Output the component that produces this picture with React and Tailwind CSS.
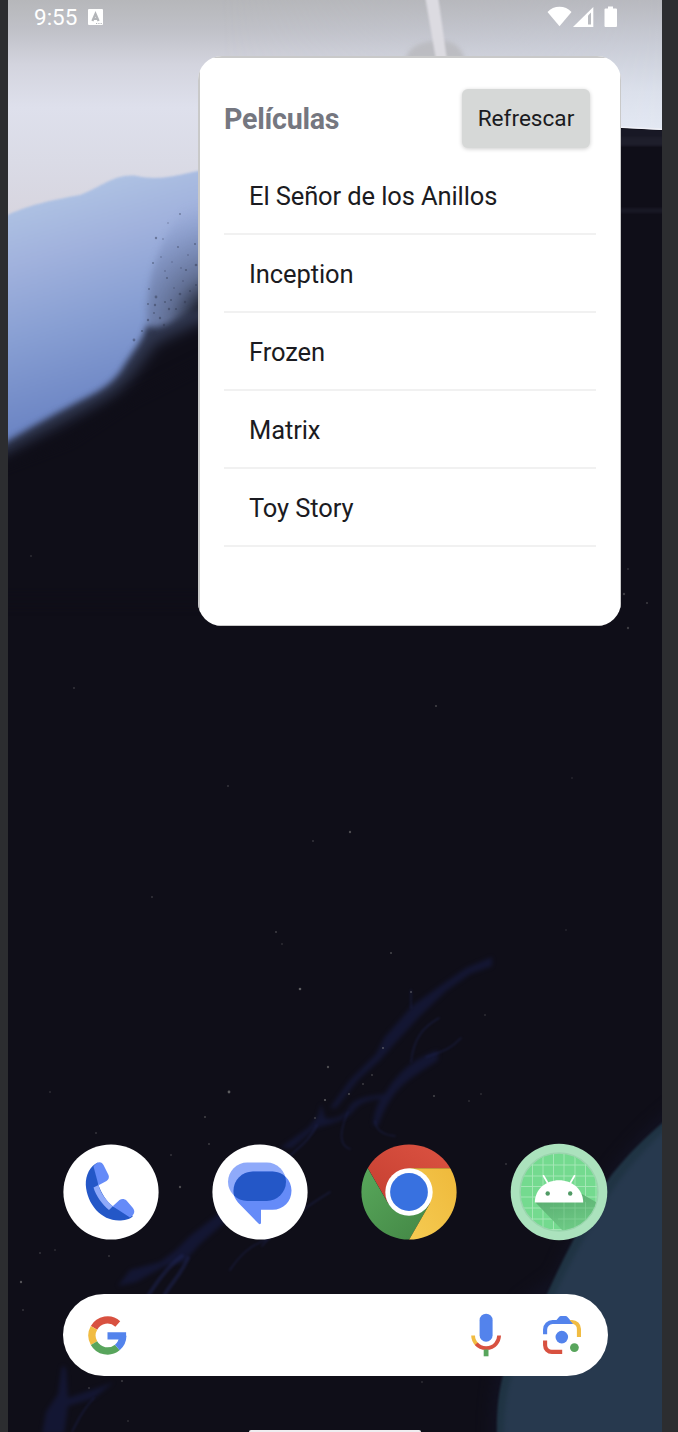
const movies = ['El Señor de los Anillos', 'Inception', 'Frozen', 'Matrix', 'Toy Story'];

const stars = [
  [300, 989, 1.3, 0.5], [391, 953, 1.1, 0.35], [411, 992, 1.1, 0.35], [229, 1092, 1.4, 0.5],
  [328, 1067, 1.2, 0.4], [383, 1048, 1.1, 0.4], [325, 1100, 1.1, 0.5], [315, 1118, 1, 0.3],
  [434, 1096, 1.1, 0.35], [276, 932, 1.1, 0.3], [282, 944, 1, 0.2], [349, 1094, 1, 0.4],
  [363, 1084, 1, 0.3], [372, 1075, 1, 0.3], [205, 1117, 1, 0.35], [21, 1282, 1.2, 0.45],
  [40, 1253, 1, 0.25], [23, 1310, 1, 0.25], [55, 1250, 1, 0.2], [109, 1256, 1, 0.25],
  [180, 1187, 1.2, 0.4], [171, 1155, 1, 0.25], [209, 1144, 1, 0.3], [96, 1133, 1, 0.25],
  [128, 1421, 1, 0.2], [350, 832, 1.2, 0.4], [313, 841, 1, 0.25], [228, 786, 1, 0.25],
  [436, 706, 1, 0.35], [624, 594, 1.2, 0.3], [647, 603, 1, 0.3], [628, 628, 1.2, 0.3],
  [628, 569, 1, 0.2], [74, 688, 1, 0.25], [31, 556, 1, 0.2], [122, 1381, 1, 0.3],
  [89, 1388, 1, 0.25], [506, 1164, 1, 0.25], [481, 1094, 1, 0.2], [469, 1101, 1, 0.2],
  [572, 778, 1, 0.15], [152, 897, 1, 0.25], [50, 1092, 1, 0.2], [422, 1382, 1, 0.2],
  [566, 930, 1, 0.15], [485, 1015, 1, 0.2],
];

const specks = [
  [156, 238, 1.2], [163, 239, 0.8], [153, 263, 1], [161, 257, 0.8], [178, 247, 0.9], [180, 214, 0.9],
  [167, 278, 1], [165, 271, 0.8], [156, 297, 1.4], [180, 294, 1.3], [149, 289, 0.9], [148, 304, 1],
  [155, 305, 1.2], [154, 313, 0.9], [186, 270, 1.1], [196, 265, 1.3], [196, 285, 1], [195, 244, 1],
  [171, 300, 1], [169, 309, 1.2], [160, 318, 1.2], [134, 340, 1.4], [155, 333, 1.8], [174, 288, 0.8],
  [183, 281, 0.8], [188, 255, 0.8], [168, 223, 0.7], [148, 320, 1.2], [164, 325, 1.2], [176, 309, 1.1],
  [185, 302, 1.2], [190, 291, 1.1], [142, 331, 1.1], [181, 268, 0.8], [172, 262, 0.7], [165, 302, 1],
];

function Wallpaper() {
  return (
    <svg className="absolute inset-0 h-full w-full" viewBox="8 0 654 1432" aria-hidden="true">
      <defs>
        <linearGradient id="sky" gradientUnits="userSpaceOnUse" x1="0" y1="0" x2="0" y2="215">
          <stop offset="0" stopColor="#b6b7ba" />
          <stop offset="0.14" stopColor="#c0c1c8" />
          <stop offset="0.3" stopColor="#d3d4de" />
          <stop offset="0.5" stopColor="#dee0ec" />
          <stop offset="0.75" stopColor="#dadbe6" />
          <stop offset="1" stopColor="#d7d5df" />
        </linearGradient>
        <linearGradient id="skyRight" gradientUnits="userSpaceOnUse" x1="0" y1="0" x2="0" y2="130">
          <stop offset="0" stopColor="#b8b9bf" />
          <stop offset="0.3" stopColor="#c7cad4" />
          <stop offset="0.7" stopColor="#dbe0eb" />
          <stop offset="1" stopColor="#e3e8f3" />
        </linearGradient>
        <linearGradient id="fadeRight" x1="0" y1="0" x2="1" y2="0">
          <stop offset="0" stopColor="#000" />
          <stop offset="1" stopColor="#fff" />
        </linearGradient>
        <mask id="rightMask" maskUnits="userSpaceOnUse" x="220" y="0" width="442" height="135">
          <rect x="220" width="442" height="135" fill="url(#fadeRight)" />
        </mask>
        <linearGradient id="wave" gradientUnits="userSpaceOnUse" x1="60" y1="185" x2="125" y2="400">
          <stop offset="0" stopColor="#b0c4e4" />
          <stop offset="0.28" stopColor="#a1b2dd" />
          <stop offset="0.6" stopColor="#889fd3" />
          <stop offset="1" stopColor="#6c85c4" />
        </linearGradient>
        <radialGradient id="dust" gradientUnits="userSpaceOnUse" cx="225" cy="325" r="125">
          <stop offset="0" stopColor="#12121b" />
          <stop offset="0.25" stopColor="#1f2331" />
          <stop offset="0.45" stopColor="#55607f" stopOpacity="0.75" />
          <stop offset="0.7" stopColor="#6d7ca6" stopOpacity="0.5" />
          <stop offset="1" stopColor="#8094c8" stopOpacity="0" />
        </radialGradient>
        <filter id="soft1" x="-10%" y="-10%" width="120%" height="120%" colorInterpolationFilters="sRGB"><feGaussianBlur stdDeviation="1" /></filter>
        <filter id="soft2" x="-10%" y="-10%" width="120%" height="120%" colorInterpolationFilters="sRGB"><feGaussianBlur stdDeviation="2" /></filter>
        <filter id="soft3" x="-15%" y="-15%" width="130%" height="130%" colorInterpolationFilters="sRGB"><feGaussianBlur stdDeviation="3" /></filter>
        <filter id="soft7" x="-30%" y="-30%" width="160%" height="160%" colorInterpolationFilters="sRGB"><feGaussianBlur stdDeviation="7" /></filter>
      </defs>
      <rect x="8" width="654" height="1432" fill="#0f0e18" />
      <path d="M8 0H662V128L230 128V240H8Z" fill="url(#sky)" />
      <path d="M220 0H662V130L610 127L220 130Z" fill="url(#skyRight)" mask="url(#rightMask)" />
      <path d="M405 60C409 48 415 44 432 41C450 39 461 44 465 60Z" fill="#b7b7bb" opacity="0.75" filter="url(#soft2)" />
      <path d="M425 -4H438L447 60H436Z" fill="#dcdbe1" filter="url(#soft1)" />
      <path d="M612 128.500L662 130.500V140H612Z" fill="#181825" />
      <path d="M612 126.800L662 129.200" stroke="#f0f1f8" strokeWidth="1.500" />
      <path d="M612 137H670V146H612Z" fill="#1e1e2b" filter="url(#soft1)" />
      <path d="M612 208H670V213H612Z" fill="#181824" filter="url(#soft1)" />

      <path d="M-10 224C20 207 42 202 80 195C102 187 115 173 137 176C165 182 180 173 230 165V470H-10Z" fill="url(#wave)" filter="url(#soft1)" />
      <path d="M230 184V350H150C140 300 150 240 200 190Z" fill="url(#dust)" filter="url(#soft3)" />
      <g filter="url(#soft3)">
        <path d="M240 300C205 306 186 314 172 322C162 328 152 328 146 326C145 338 132 352 121 371C112 383 102 390 88 397C64 409 36 424 -20 458V540H240Z" fill="#30374f" />
      </g>
      <g filter="url(#soft7)">
        <path d="M260 302C220 310 185 330 156 344C142 362 132 380 114 394C90 410 62 422 -20 468V560H260Z" fill="#0f0e18" />
      </g>
      <path d="M-20 474L70 440L130 400L250 340V600H-20Z" fill="#0f0e18" filter="url(#soft7)" />
      {specks.map(([x, y, r], i) => (
        <circle key={i} cx={x} cy={y} r={r} fill="#2e354b" opacity="0.45" />
      ))}

      <g fill="#171c45" opacity="0.6" filter="url(#soft2)">
        <path d="M492 957L466 968L440 986L412 1006L384 1038L376 1054L350 1080L330 1108L336 1108L358 1080L380 1060L396 1042L420 1016L446 991L470 974L492 966Z" />
        <path d="M438 1050C415 1058 398 1072 386 1092C378 1100 374 1112 373 1125L378 1126C382 1114 388 1102 396 1092C408 1078 424 1070 438 1060Z" />
        <path d="M386 1094C368 1096 352 1098 348 1110C340 1118 332 1120 325 1118L321 1104L318 1116L308 1128L280 1148H292L316 1128L330 1124C342 1120 350 1116 354 1110C362 1100 374 1100 388 1097Z" />
        <path d="M226 1208L190 1236L176 1250L160 1262L130 1270L118 1286L136 1282L165 1266L184 1262L200 1244L232 1216Z" />
        <path d="M62 1366L58 1394L46 1412L42 1434H64L68 1406L94 1398L114 1382L92 1390L68 1398L66 1368Z" />
      </g>
      <g fill="none" stroke="#20275a" strokeLinecap="round" opacity="0.45" filter="url(#soft1)">
        <path d="M439 1018C425 1026 414 1036 411 1062M461 1038C450 1050 440 1052 426 1057M411 990V1008" strokeWidth="1.600" />
        <path d="M348 1112C340 1130 338 1145 350 1149M375 1121C376 1130 383 1135 395 1136" strokeWidth="1.500" />
        <path d="M317 1125C308 1143 298 1147 288 1158" strokeWidth="1.800" />
        <path d="M182 1256C168 1266 158 1280 148 1296M188 1258C180 1276 172 1282 165 1294" strokeWidth="4" />
        <path d="M330 1192C304 1208 280 1225 262 1246M270 1238C250 1245 240 1255 230 1270M94 1398C84 1408 78 1420 72 1432" strokeWidth="1.600" />
      </g>
      {stars.map(([x, y, r, o], i) => (
        <circle key={i} cx={x} cy={y} r={r} fill="#a9a9a6" opacity={o} />
      ))}

      <path d="M680 1100C615 1150 588 1195 554 1275L520 1300C503 1330 488 1380 490 1450H680Z" fill="#131325" opacity="0.7" filter="url(#soft7)" />
      <path d="M668 1118C634 1147 607 1175 590 1209C574 1238 560 1265 547 1294C512 1345 495 1370 497 1440H668Z" fill="#203444" filter="url(#soft1)" />
      <path d="M672 1124C638 1154 614 1184 596 1218C578 1249 566 1270 554 1297C520 1348 503 1376 504 1440H672Z" fill="#27394e" filter="url(#soft2)" />
    </svg>
  );
}

function StatusBar() {
  return (
    <header className="flex h-[34px] items-center justify-between pr-[45px] pl-[26px] text-white">
      <div className="flex items-center gap-[11px]">
        <span className="text-[22.5px] leading-[34px]">9:55</span>
        <svg className="h-4 w-[15px]" viewBox="0 0 15 16">
          <rect width="15" height="16" rx="1" fill="#fff" />
          <path d="M4.400 12L7.500 4.800L10.600 12M5.600 9.800H9.400" fill="none" stroke="#b3b5b9" strokeWidth="2.200" />
          <path d="M8 14.500H14" stroke="#b3b5b9" strokeWidth="1" strokeDasharray="1.2 1.1" />
        </svg>
      </div>
      <svg className="h-[22px] w-[70px]" viewBox="547 6 70 22">
        <path d="M547.500 12C553.500 4.900 565.500 4.900 571.500 12L559.500 26.300Z" fill="#fff" />
        <path d="M593.300 7V27H573Z" fill="#fff" />
        <path d="M588 15.500L591 12.500V24.500H588Z" fill="#b9bbc0" />
        <path d="M608 6.500h5v2h3a1 1 0 0 1 1 1V26a1 1 0 0 1-1 1h-10.500a1 1 0 0 1-1-1V9.500a1 1 0 0 1 1-1H608Z" fill="#fff" />
      </svg>
    </header>
  );
}

function MoviesWidget() {
  return (
    <section className="mt-[22px] ml-[190px] h-[570px] w-[423px] overflow-hidden rounded-[24px] bg-white">
      <div className="h-full border-2 border-r border-b border-[#c9c9c9] px-6 pt-[31px]">
        <div className="flex items-center justify-between pr-[6px]">
          <h1 className="pt-px text-[28.6px] leading-[34px] font-bold tracking-[-0.25px] text-[#757780]">Películas</h1>
          <button className="h-[59px] w-[128px] rounded-[6px] bg-[#d6d8d7] pt-px text-[22.6px] text-[#1b1b21] shadow-[0_1px_4px_rgba(0,0,0,0.2)]">
            Refrescar
          </button>
        </div>
        <ul className="mt-[9px]">
          {movies.map((title) => (
            <li key={title} className="flex h-[78.1px] items-center border-b-2 border-[#f1f1f1] pt-[2px] pl-[25px] text-[25.5px] tracking-[-0.11px] text-[#1b1b21]">
              {title}
            </li>
          ))}
        </ul>
      </div>
    </section>
  );
}

function PhoneIcon() {
  return (
    <svg className="h-24 w-24" viewBox="0 0 96 96">
      <circle cx="48" cy="48" r="47.600" fill="#fff" />
      <path d="M35 18.500C27 22 22.500 31 22.800 41C24 60 38 76.500 56 76.500C61 76.500 67 75.500 70 72L49.500 62C44 58 38 49 35.500 41Z" fill="#2457c7" />
      <path d="M30.500 43.500L35.500 41C37.500 49 43 56.500 49.800 62.200L46 66C39 60 33 52 30.500 43.500Z" fill="#8faafa" />
      <path d="M30.500 22.500C32 20 34.500 18.300 36.500 18.300C38.500 18.300 39.500 19.500 40.500 21L45.500 31C46.500 33.500 45.500 35.500 43.500 37L35.500 41.200Z" fill="#658bf8" />
      <path d="M49.700 62.300L56.500 56C58.500 54.500 61.500 54.500 63.500 56.500L69.500 63.500C73 67.500 71 71 67 73.500Z" fill="#658bf8" />
    </svg>
  );
}

function MessagesIcon() {
  return (
    <svg className="h-24 w-24" viewBox="0 0 96 96">
      <defs><clipPath id="backBubble"><rect x="16" y="18.500" width="58" height="38.500" rx="19.250" /></clipPath></defs>
      <circle cx="48" cy="48" r="47.600" fill="#fff" />
      <rect x="16" y="18.500" width="58" height="38.500" rx="19.250" fill="#8faafa" />
      <path d="M41 27.500H60.500C71 27.500 79.500 36 79.500 46.500C79.500 57.500 71.500 65.800 60.500 65.800H49V78.500C49 80.500 47.500 80.500 46.500 79.500L26 58.500C23 55 21.500 51.500 21.500 47C21.500 36 30 27.500 41 27.500Z" fill="#658bf8" />
      <path clipPath="url(#backBubble)" d="M41 27.500H60.500C71 27.500 79.500 36 79.500 46.500C79.500 57.500 71.500 65.800 60.500 65.800H49L26 58.500C23 55 21.500 51.500 21.500 47C21.500 36 30 27.500 41 27.500Z" fill="#2457c7" />
    </svg>
  );
}

function ChromeIcon() {
  return (
    <svg className="h-24 w-24" viewBox="0 0 96 96">
      <defs>
        <clipPath id="disc"><circle cx="48" cy="48" r="47.600" /></clipPath>
        <linearGradient id="cr" x1="0" y1="1" x2="1" y2="0"><stop stopColor="#c43e30" /><stop offset="1" stopColor="#dc5342" /></linearGradient>
        <linearGradient id="cg" x1="0" y1="0" x2="0.800" y2="1"><stop stopColor="#5aaa5d" /><stop offset="1" stopColor="#458a47" /></linearGradient>
        <linearGradient id="cy" x1="1" y1="0" x2="0" y2="1"><stop stopColor="#efb93b" /><stop offset="1" stopColor="#f5cb52" /></linearGradient>
      </defs>
      <g clipPath="url(#disc)">
        <path d="M0 0H96V24.300H48L27.500 60L6.900 24.300Z" fill="url(#cr)" />
        <path d="M0 12.500L27.500 60H68.600L48 96H0Z" fill="url(#cg)" />
        <path d="M48 24.300H96V96H48L68.600 60Z" fill="url(#cy)" />
      </g>
      <circle cx="48" cy="48" r="23.700" fill="#fff" />
      <circle cx="48" cy="48" r="18.900" fill="#3871e0" />
    </svg>
  );
}

function AndroidIcon() {
  return (
    <svg className="h-[98px] w-[98px]" viewBox="0 0 98 98">
      <defs>
        <clipPath id="inner"><circle cx="49" cy="49" r="38.500" /></clipPath>
        <linearGradient id="cast" x1="0.200" y1="0" x2="0.700" y2="1"><stop stopColor="#56a66c" /><stop offset="1" stopColor="#6fcd87" /></linearGradient>
      </defs>
      <circle cx="49" cy="49" r="48.300" fill="#abe2bd" />
      <circle cx="49" cy="49" r="39" fill="#74da8f" stroke="#9bd5ae" strokeWidth="1.500" />
      <g clipPath="url(#inner)">
        <path d="M22.500 0V98M33 0V98M43.500 0V98M54 0V98M65 0V98M75.500 0V98M86 0V98M0 22H98M0 33H98M0 43.500H98M0 54H98M0 65H98M0 76H98M0 86.500H98" stroke="#a8e9b9" strokeWidth="0.900" />
        <path d="M25 59L53 88H98V66L72 51L60 59Z" fill="url(#cast)" opacity="0.900" />
        <path d="M54 59V90M65 59V90M75.500 59V90M40 65H90M48 76H90" stroke="#8fdda5" strokeWidth="0.700" opacity="0.600" />
      </g>
      <path d="M24.800 59.500C25 46 36 37.300 49 37.300C62 37.300 73 46 73.200 59.500Z" fill="#fff" />
      <path d="M38 40.500L33.500 32.800M60 40.500L64.500 32.800" stroke="#fff" strokeWidth="1.700" strokeLinecap="round" />
      <circle cx="37.700" cy="50.500" r="2.200" fill="#509a65" />
      <circle cx="60.200" cy="50.500" r="2.200" fill="#509a65" />
    </svg>
  );
}

function SearchBar() {
  return (
    <div className="mt-[54px] ml-[54.5px] flex h-[82px] w-[545px] items-center rounded-full bg-white pr-[26px] pl-[25px]">
      <svg className="h-[39px] w-[39px]" viewBox="0 0 39 39">
        <g fill="none" strokeWidth="7.300">
          <path d="M29.800 7.900A15.500 15.500 0 0 0 6 11.900" stroke="#d85140" />
          <path d="M6 11.900A15.500 15.500 0 0 0 6 27.100" stroke="#f1bc42" />
          <path d="M6 27.100A15.500 15.500 0 0 0 29.300 31.500" stroke="#58a55c" />
          <path d="M29.300 31.500A15.500 15.500 0 0 0 34.800 19.800" stroke="#5383ec" />
        </g>
        <path d="M19.500 16.200H38.100V20C38 21.500 37.900 22.500 37.700 23.400H19.500Z" fill="#5383ec" />
      </svg>
      <svg className="ml-auto h-11 w-8" viewBox="0 0 32 44">
        <rect x="9.600" y="0.700" width="13" height="28" rx="6.500" fill="#5383ec" />
        <path d="M3.100 22.500C3.100 26 4.500 29 7 31.500" fill="none" stroke="#f1bc42" strokeWidth="3.800" />
        <path d="M6.300 30.700C11 36.600 21.200 36.600 26 30.700C28 28.400 29 25.500 29.100 22.500" fill="none" stroke="#d85140" strokeWidth="3.800" />
        <path d="M13.700 36.500H18.500V43.300H13.700Z" fill="#58a55c" />
      </svg>
      <svg className="ml-10 h-10 w-10" viewBox="0 0 40 40">
        <path d="M3.100 19.200V14.500A7.500 7.500 0 0 1 10.600 7H29" fill="none" stroke="#5383ec" strokeWidth="4.100" />
        <path d="M12.800 7L17 2Q17.700 1.100 19 1.100H23.500Q24.800 1.100 25.500 2L31.500 9H12Z" fill="#5383ec" />
        <path d="M27.500 4.900H30A9 9 0 0 1 39 13.900V22H34.900V14.500A5.500 5.500 0 0 0 31.200 9.100Z" fill="#f1bc42" />
        <path d="M3.100 25.500V30.200A6.700 6.700 0 0 0 9.800 36.900H20.200" fill="none" stroke="#d85140" strokeWidth="4.100" />
        <circle cx="19.800" cy="22.100" r="6.300" fill="#5383ec" />
        <circle cx="32.400" cy="32.600" r="4.400" fill="#58a55c" />
      </svg>
    </div>
  );
}

export default function App() {
  return (
    <div className="h-[1432px] w-[678px] overflow-hidden bg-[#2c2d30] pr-4 pl-2 font-[Roboto,sans-serif]">
      <main className="relative h-full overflow-hidden">
        <Wallpaper />
        <div className="relative flex h-full flex-col">
          <StatusBar />
          <MoviesWidget />
          <nav className="mt-[517px] flex h-[97px] items-center justify-between pr-[53.5px] pl-[54.5px]">
            <PhoneIcon />
            <MessagesIcon />
            <ChromeIcon />
            <AndroidIcon />
          </nav>
          <SearchBar />
          <div className="mt-auto ml-[241px] h-[2px] w-[172px] rounded-t-[2px] bg-[#efedf0]" />
        </div>
      </main>
    </div>
  );
}
